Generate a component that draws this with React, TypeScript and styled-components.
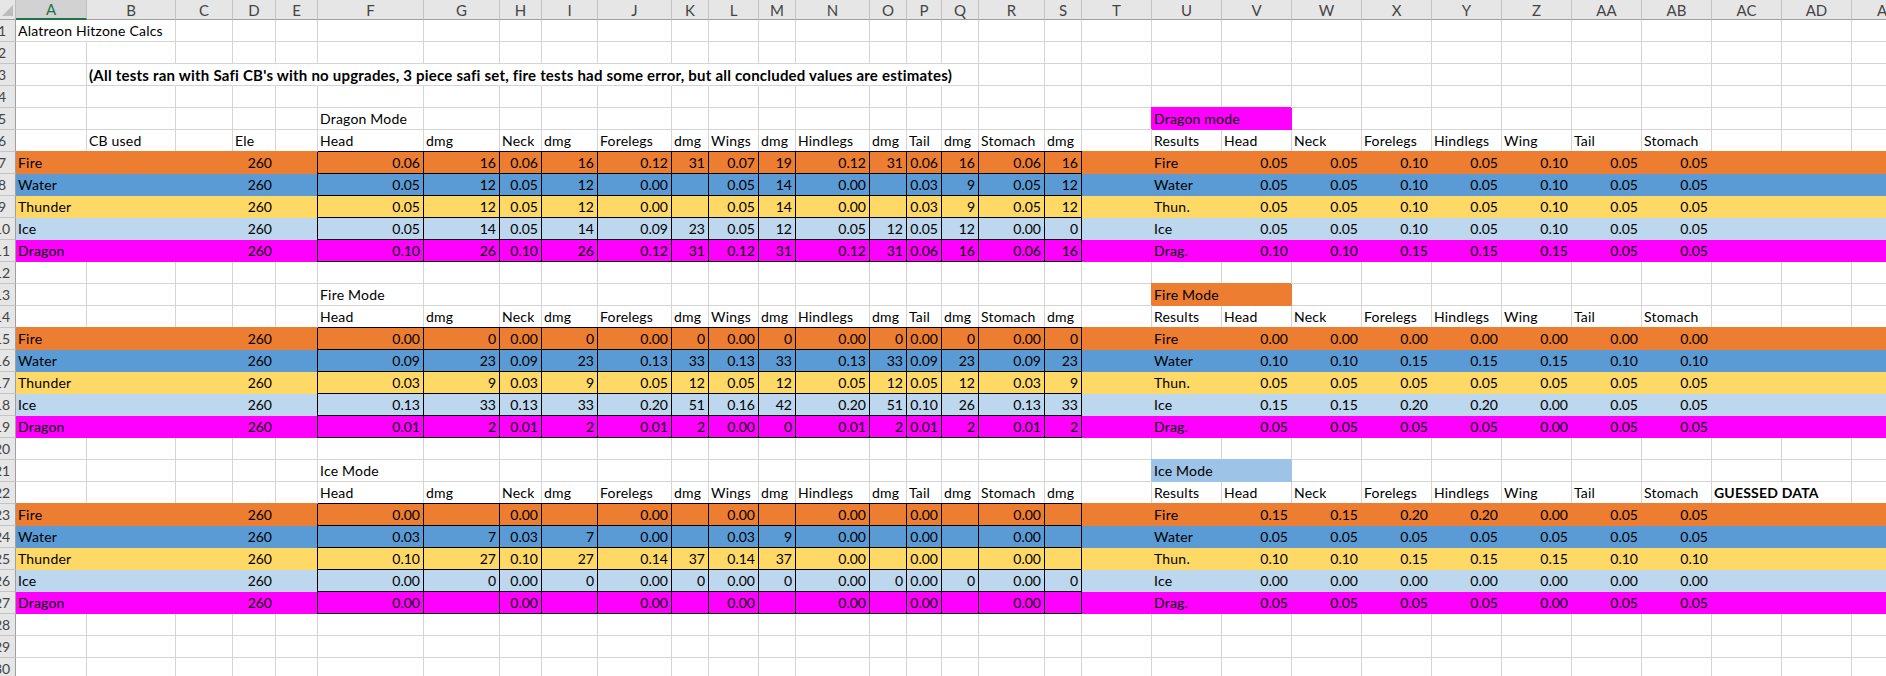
import React from "react";
import styled, { createGlobalStyle } from "styled-components";

const GlobalStyle = createGlobalStyle`
  html, body {
    margin: 0;
    padding: 0;
    background: #fff;
    overflow: hidden;
  }
`;

const COLUMNS = [
  "A", "B", "C", "D", "E", "F", "G", "H", "I", "J", "K", "L", "M", "N", "O", "P",
  "Q", "R", "S", "T", "U", "V", "W", "X", "Y", "Z", "AA", "AB", "AC", "AD", "AE",
];
const WIDTHS = [
  71, 89, 57, 43, 42, 106, 76, 42, 56, 74, 37, 50, 37, 74, 37, 35,
  37, 66, 37, 70, 70, 70, 70, 70, 70, 70, 70, 70, 70, 70, 70,
];
const ROW_COUNT = 30;

const COLORS = {
  fire: "#ed7d31",
  water: "#5b9bd5",
  thunder: "#ffd966",
  ice: "#bdd7ee",
  dragon: "#ff00ff",
  iceLabel: "#9dc3e6",
};
type Fill = keyof typeof COLORS;

const F = 5; // first boxed column
const U = 20;
const V = 21;

const ELEMENTS: { name: string; short: string; fill: Fill }[] = [
  { name: "Fire", short: "Fire", fill: "fire" },
  { name: "Water", short: "Water", fill: "water" },
  { name: "Thunder", short: "Thun.", fill: "thunder" },
  { name: "Ice", short: "Ice", fill: "ice" },
  { name: "Dragon", short: "Drag.", fill: "dragon" },
];

const HEADERS = [
  "Head", "dmg", "Neck", "dmg", "Forelegs", "dmg", "Wings", "dmg",
  "Hindlegs", "dmg", "Tail", "dmg", "Stomach", "dmg",
];
const RESULT_HEADERS = ["Head", "Neck", "Forelegs", "Hindlegs", "Wing", "Tail", "Stomach"];

const same = (v: string) => Array.from({ length: 7 }, () => v);

const SECTIONS = [
  {
    start: 5,
    title: "Dragon Mode",
    label: "Dragon mode",
    labelFill: "dragon" as Fill,
    tests: [
      ["0.06", "16", "0.06", "16", "0.12", "31", "0.07", "19", "0.12", "31", "0.06", "16", "0.06", "16"],
      ["0.05", "12", "0.05", "12", "0.00", "", "0.05", "14", "0.00", "", "0.03", "9", "0.05", "12"],
      ["0.05", "12", "0.05", "12", "0.00", "", "0.05", "14", "0.00", "", "0.03", "9", "0.05", "12"],
      ["0.05", "14", "0.05", "14", "0.09", "23", "0.05", "12", "0.05", "12", "0.05", "12", "0.00", "0"],
      ["0.10", "26", "0.10", "26", "0.12", "31", "0.12", "31", "0.12", "31", "0.06", "16", "0.06", "16"],
    ],
    results: [
      ["0.05", "0.05", "0.10", "0.05", "0.10", "0.05", "0.05"],
      ["0.05", "0.05", "0.10", "0.05", "0.10", "0.05", "0.05"],
      ["0.05", "0.05", "0.10", "0.05", "0.10", "0.05", "0.05"],
      ["0.05", "0.05", "0.10", "0.05", "0.10", "0.05", "0.05"],
      ["0.10", "0.10", "0.15", "0.15", "0.15", "0.05", "0.05"],
    ],
  },
  {
    start: 13,
    title: "Fire Mode",
    label: "Fire Mode",
    labelFill: "fire" as Fill,
    tests: [
      ["0.00", "0", "0.00", "0", "0.00", "0", "0.00", "0", "0.00", "0", "0.00", "0", "0.00", "0"],
      ["0.09", "23", "0.09", "23", "0.13", "33", "0.13", "33", "0.13", "33", "0.09", "23", "0.09", "23"],
      ["0.03", "9", "0.03", "9", "0.05", "12", "0.05", "12", "0.05", "12", "0.05", "12", "0.03", "9"],
      ["0.13", "33", "0.13", "33", "0.20", "51", "0.16", "42", "0.20", "51", "0.10", "26", "0.13", "33"],
      ["0.01", "2", "0.01", "2", "0.01", "2", "0.00", "0", "0.01", "2", "0.01", "2", "0.01", "2"],
    ],
    results: [
      same("0.00"),
      ["0.10", "0.10", "0.15", "0.15", "0.15", "0.10", "0.10"],
      same("0.05"),
      ["0.15", "0.15", "0.20", "0.20", "0.00", "0.05", "0.05"],
      ["0.05", "0.05", "0.05", "0.05", "0.00", "0.05", "0.05"],
    ],
  },
  {
    start: 21,
    title: "Ice Mode",
    label: "Ice Mode",
    labelFill: "iceLabel" as Fill,
    tests: [
      ["0.00", "", "0.00", "", "0.00", "", "0.00", "", "0.00", "", "0.00", "", "0.00", ""],
      ["0.03", "7", "0.03", "7", "0.00", "", "0.03", "9", "0.00", "", "0.00", "", "0.00", ""],
      ["0.10", "27", "0.10", "27", "0.14", "37", "0.14", "37", "0.00", "", "0.00", "", "0.00", ""],
      ["0.00", "0", "0.00", "0", "0.00", "0", "0.00", "0", "0.00", "0", "0.00", "0", "0.00", "0"],
      ["0.00", "", "0.00", "", "0.00", "", "0.00", "", "0.00", "", "0.00", "", "0.00", ""],
    ],
    results: [
      ["0.15", "0.15", "0.20", "0.20", "0.00", "0.05", "0.05"],
      same("0.05"),
      ["0.10", "0.10", "0.15", "0.15", "0.15", "0.10", "0.10"],
      same("0.00"),
      ["0.05", "0.05", "0.05", "0.05", "0.00", "0.05", "0.05"],
    ],
  },
];

interface CellSpec {
  text?: string;
  right?: boolean;
  bold?: boolean;
  wide?: boolean;
  fill?: Fill;
  boxed?: boolean;
  firstBoxed?: boolean;
  topBoxed?: boolean;
  topFill?: boolean;
  label?: boolean;
  covered?: boolean; // taken by the label in the column before
  spill?: boolean; // text runs on into the next cell, so no line on the right
}

const buildSheet = (): CellSpec[][] => {
  const rows: CellSpec[][] = Array.from({ length: ROW_COUNT + 1 }, () =>
    COLUMNS.map(() => ({}))
  );

  rows[1][0] = { text: "Alatreon Hitzone Calcs", spill: true };
  rows[3][1] = {
    text: "(All tests ran with Safi CB's with no upgrades, 3 piece safi set, fire tests had some error, but all concluded values are estimates)",
    bold: true,
    wide: true,
    spill: true,
  };
  for (let c = 2; c <= 15; c++) rows[3][c] = { spill: true };

  SECTIONS.forEach(section => {
    const { start } = section;
    rows[start][F] = { text: section.title };
    rows[start][U] = { text: section.label, fill: section.labelFill, label: true };
    rows[start][V] = { covered: true };

    const head = rows[start + 1];
    if (start === 5) {
      head[1] = { text: "CB used" };
      head[3] = { text: "Ele" };
    }
    HEADERS.forEach((h, i) => {
      head[F + i] = { text: h };
    });
    head[U] = { text: "Results" };
    RESULT_HEADERS.forEach((h, i) => {
      head[V + i] = { text: h };
    });

    ELEMENTS.forEach((el, e) => {
      const row = rows[start + 2 + e];
      const topFill = e === 0;
      COLUMNS.forEach((_, c) => {
        row[c] = { fill: el.fill, topFill };
      });
      row[0] = { text: el.name, fill: el.fill, topFill };
      row[3] = { text: "260", right: true, fill: el.fill, topFill };
      section.tests[e].forEach((v, i) => {
        row[F + i] = {
          text: v,
          right: true,
          fill: el.fill,
          boxed: true,
          firstBoxed: i === 0,
          topBoxed: e === 0,
        };
      });
      row[U] = { text: el.short, fill: el.fill, topFill };
      section.results[e].forEach((v, i) => {
        row[V + i] = { text: v, right: true, fill: el.fill, topFill };
      });
    });
  });

  rows[22][28] = { text: "GUESSED DATA", bold: true, spill: true };
  return rows;
};

const SHEET = buildSheet();

const Page = styled.div`
  width: 1886px;
  height: 676px;
  overflow: hidden;
  background: #fff;
`;

const Sheet = styled.div`
  display: grid;
  grid-template-columns: 16px ${WIDTHS.map(w => `${w}px`).join(" ")};
  grid-auto-rows: 22px;
  grid-template-rows: 20px;
  font-family: Lato, "Liberation Sans", sans-serif;
  font-size: 14px;
  font-variant-ligatures: none;
  color: #000;
`;

const Corner = styled.div`
  display: flex;
  align-items: flex-end;
  justify-content: flex-end;
  padding: 0 2px 3px 0;
  box-sizing: border-box;
  background: #e6e6e6;
  border-right: 1px solid #bdbdbd;
  border-bottom: 1px solid #9f9f9f;
`;

const ColumnHead = styled.div<{ $active?: boolean }>`
  display: flex;
  align-items: center;
  justify-content: center;
  box-sizing: border-box;
  overflow: hidden;
  font-size: 15px;
  background: ${p => (p.$active ? "#d2d2d2" : "#e6e6e6")};
  color: ${p => (p.$active ? "#217346" : "#444")};
  border-right: 1px solid ${p => (p.$active ? "#bdbdbd" : "#c4c4c4")};
  border-bottom: ${p => (p.$active ? "2px solid #217346" : "1px solid #9f9f9f")};
`;

const RowHead = styled.div`
  box-sizing: border-box;
  overflow: hidden;
  background: #e6e6e6;
  color: #444;
  border-right: 1px solid #9f9f9f;
  border-bottom: 1px solid #c4c4c4;
  line-height: 21px;
`;

const RowNumber = styled.span`
  display: block;
  width: 28px;
  margin-left: -12px;
  text-align: center;
`;

const Cell = styled.div<{
  $right?: boolean;
  $bold?: boolean;
  $wide?: boolean;
  $fill?: Fill;
  $boxed?: boolean;
  $firstBoxed?: boolean;
  $topBoxed?: boolean;
  $topFill?: boolean;
  $label?: boolean;
  $spill?: boolean;
}>`
  display: flex;
  align-items: center;
  justify-content: ${p => (p.$right ? "flex-end" : "flex-start")};
  box-sizing: border-box;
  min-width: 0;
  padding: 0 3px 0 2px;
  white-space: nowrap;
  font-size: ${p => (p.$wide ? "15px" : "14px")};
  letter-spacing: ${p => (p.$wide ? "0.22px" : p.$right ? "0" : "0.2px")};
  font-weight: ${p => (p.$bold ? 700 : 400)};
  grid-column: ${p => (p.$label ? "span 2" : "auto")};
  background: ${p => (p.$fill ? COLORS[p.$fill] : "transparent")};
  border-bottom: 1px solid ${p => (p.$boxed ? "#000" : p.$fill ? "transparent" : "#d4d4d4")};
  border-right: 1px solid
    ${p => (p.$boxed ? "#000" : p.$fill || p.$spill ? "transparent" : "#d4d4d4")};
  box-shadow: ${p => {
    if (p.$label && p.$fill) return `-1px -1px 0 ${COLORS[p.$fill]}`;
    if (p.$topFill && p.$fill) return `0 -1px 0 ${COLORS[p.$fill]}`;
    const edges = [p.$firstBoxed ? "-1px 0 0 #000" : "", p.$topBoxed ? "0 -1px 0 #000" : ""];
    return edges.filter(Boolean).join(", ") || "none";
  }};
`;

const CornerMark = () => (
  <svg width="11" height="11" viewBox="0 0 11 11">
    <path d="M11 0V11H0Z" fill="#bcbcbc" />
  </svg>
);

export default function App() {
  return (
    <Page>
      <GlobalStyle />
      <Sheet>
        <Corner>
          <CornerMark />
        </Corner>
        {COLUMNS.map((c, i) => (
          <ColumnHead key={c} $active={i === 0}>
            {c}
          </ColumnHead>
        ))}
        {SHEET.slice(1).map((row, r) => (
          <React.Fragment key={r}>
            <RowHead>
              <RowNumber>{r + 1}</RowNumber>
            </RowHead>
            {row.map((cell, c) =>
              cell.covered ? null : (
                <Cell
                  key={c}
                  $right={cell.right}
                  $bold={cell.bold}
                  $wide={cell.wide}
                  $fill={cell.fill}
                  $boxed={cell.boxed}
                  $firstBoxed={cell.firstBoxed}
                  $topBoxed={cell.topBoxed}
                  $topFill={cell.topFill}
                  $label={cell.label}
                  $spill={cell.spill}
                >
                  {cell.text}
                </Cell>
              )
            )}
          </React.Fragment>
        ))}
      </Sheet>
    </Page>
  );
}
